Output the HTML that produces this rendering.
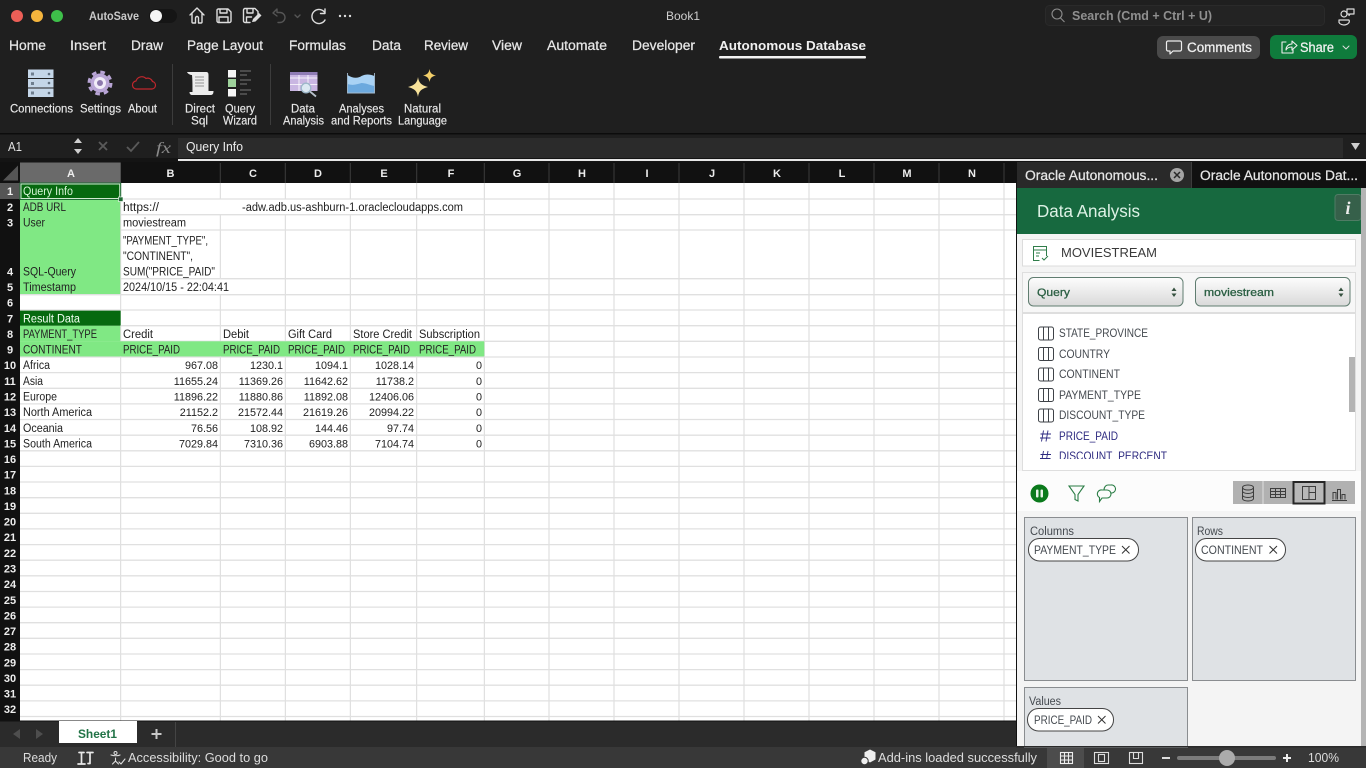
<!DOCTYPE html>
<html lang="en"><head><meta charset="utf-8"><title>Book1</title>
<style>
html,body{margin:0;padding:0;background:#1f1f1f;overflow:hidden}
svg{display:block;font-family:"Liberation Sans",sans-serif}
.m{font-size:13.5px;fill:#e6e6e6;stroke:#e6e6e6;stroke-width:.25}
.r{font-size:11.5px;fill:#e8e8e8;stroke:#e8e8e8;stroke-width:.15;text-anchor:middle}
.c{font-size:11.5px;fill:#222}
.n{font-size:10.8px;fill:#222;text-anchor:end}
.h{font-size:11px;font-weight:bold;fill:#eee;text-anchor:middle}
.l{font-size:11.5px;fill:#454a50}
.s{font-size:12.5px;fill:#ddd}
.i{fill:none;stroke:#ddd;stroke-width:1.4;stroke-linecap:round;stroke-linejoin:round}
.p{fill:none;stroke:#3e4247;stroke-width:1}
.chip{fill:#fff;stroke:#444;stroke-width:1}
</style></head><body>
<svg width="1366" height="768" viewBox="0 0 1366 768" xmlns="http://www.w3.org/2000/svg">
<defs>
<linearGradient id="sel" x1="0" y1="0" x2="0" y2="1"><stop offset="0" stop-color="#fdfdfd"/><stop offset="1" stop-color="#d9d9d9"/></linearGradient>
<clipPath id="lst"><rect x="1022" y="314" width="334" height="145"/></clipPath>
</defs>
<rect width="1366" height="768" fill="#1f1f1f"/>
<!-- traffic -->
<circle cx="17" cy="16" r="6" fill="#ec5f57"/><circle cx="37" cy="16" r="6" fill="#f5b53d"/><circle cx="57" cy="16" r="6" fill="#3ec04a"/>
<text x="89" y="20" font-size="11.5" font-weight="bold" fill="#c9c9c9" textLength="50" lengthAdjust="spacingAndGlyphs">AutoSave</text>
<rect x="149" y="9" width="28" height="14" rx="7" fill="#151515"/><circle cx="156" cy="16" r="6" fill="#f4f4f4"/>
<!-- qat -->
<path class="i" d="M190 15l7-7 7 7M192 13v9a1 1 0 0 0 1 1h2.500v-5a1.500 1.500 0 0 1 3 0v5h2.500a1 1 0 0 0 1-1v-9"/>
<path class="i" d="M218 9h10l3 3v9a1.500 1.500 0 0 1-1.500 1.500h-11a1.500 1.500 0 0 1-1.500-1.500v-11a1.500 1.500 0 0 1 1-1zM220 9v4h7v-4M219 22v-5h9v5"/>
<path class="i" d="M250 22.500h-5a1.500 1.500 0 0 1-1.500-1.500v-11a1.500 1.500 0 0 1 1.500-1.500h10l3 3v3M247 9v4h6v-4M246.500 22v-5h5"/>
<path d="M252 22l1-3 6-6 2.500 2.500-6 6z" fill="#ddd"/>
<path class="i" style="stroke:#555" d="M273 13l4-4v3.500h3a5 5 0 0 1 0 10h-2M273 13l4 3"/>
<path class="i" style="stroke:#555" d="M295 15l2.500 2.500 2.500-2.500"/>
<path class="i" d="M325 13a7 7 0 1 0 0 7M325 9v4.500h-4.500"/>
<circle cx="340" cy="16" r="1.200" fill="#ddd"/><circle cx="345" cy="16" r="1.200" fill="#ddd"/><circle cx="350" cy="16" r="1.200" fill="#ddd"/>
<text x="666" y="20" font-size="12" fill="#cfcfcf" textLength="34" lengthAdjust="spacingAndGlyphs">Book1</text>
<!-- search -->
<rect x="1045.500" y="5.500" width="279" height="20" rx="4" fill="#232323" stroke="#2a2a2a"/>
<circle cx="1057" cy="14" r="5" fill="none" stroke="#8e8e8e" stroke-width="1.100"/><path d="M1060.500 18l4 4" stroke="#8e8e8e" stroke-width="1.100"/>
<text x="1072" y="20" font-size="12.5" font-weight="bold" fill="#8f8f8f" textLength="140" lengthAdjust="spacingAndGlyphs">Search (Cmd + Ctrl + U)</text>
<circle cx="1344" cy="14" r="3" class="i" style="stroke-width:1.200"/><path class="i" style="stroke-width:1.200" d="M1339 20h10a5 3.500 0 0 1-10 2.500zM1347 9h7v5h-4l-1 1.500v-1.500h-2z"/>
<!-- menu -->
<text class="m" x="9" y="50" textLength="37" lengthAdjust="spacingAndGlyphs">Home</text>
<text class="m" x="70" y="50" textLength="36" lengthAdjust="spacingAndGlyphs">Insert</text>
<text class="m" x="131" y="50" textLength="32" lengthAdjust="spacingAndGlyphs">Draw</text>
<text class="m" x="187" y="50" textLength="76" lengthAdjust="spacingAndGlyphs">Page Layout</text>
<text class="m" x="289" y="50" textLength="57" lengthAdjust="spacingAndGlyphs">Formulas</text>
<text class="m" x="372" y="50" textLength="29" lengthAdjust="spacingAndGlyphs">Data</text>
<text class="m" x="424" y="50" textLength="44" lengthAdjust="spacingAndGlyphs">Review</text>
<text class="m" x="492" y="50" textLength="30" lengthAdjust="spacingAndGlyphs">View</text>
<text class="m" x="547" y="50" textLength="60" lengthAdjust="spacingAndGlyphs">Automate</text>
<text class="m" x="632" y="50" textLength="63" lengthAdjust="spacingAndGlyphs">Developer</text>
<text x="719" y="50" font-size="13" font-weight="bold" fill="#f0f0f0" textLength="147" lengthAdjust="spacingAndGlyphs">Autonomous Database</text>
<rect x="719" y="56" width="147" height="2.500" rx="1" fill="#f2f2f2"/>
<!-- comments/share -->
<rect x="1157" y="36" width="103" height="23" rx="6" fill="#4a4a4a"/>
<path class="i" style="stroke:#eee;stroke-width:1.200" d="M1168 41h12a1.500 1.500 0 0 1 1.500 1.500v7a1.500 1.500 0 0 1-1.500 1.500h-7l-3 3v-3h-2a1.500 1.500 0 0 1-1.500-1.500v-7a1.500 1.500 0 0 1 1.500-1.500z"/>
<text x="1187" y="52" font-size="13.500" fill="#f0f0f0" stroke="#f0f0f0" stroke-width=".25" textLength="65" lengthAdjust="spacingAndGlyphs">Comments</text>
<rect x="1270" y="35" width="87" height="24" rx="6" fill="#0f7b3c"/>
<path class="i" style="stroke:#eee;stroke-width:1.100" d="M1286 42h-4v11h11v-3M1286 50c0-4 3-6 6-6v-3l5 4.500-5 4.500v-3c-3 0-5 1-6 3z"/>
<text x="1300" y="52" font-size="13.500" fill="#f2f2f2" stroke="#f2f2f2" stroke-width=".25" textLength="34" lengthAdjust="spacingAndGlyphs">Share</text>
<path class="i" style="stroke-width:1" d="M1343 46l3 3 3-3"/>
<!-- ribbon icons -->
<g>
<rect x="28" y="69.500" width="25.500" height="8.500" fill="#c4d6e8"/><rect x="28" y="79" width="25.500" height="8.500" fill="#c4d6e8"/><rect x="28" y="88.500" width="25.500" height="8.500" fill="#c4d6e8"/>
<rect x="31" y="72.500" width="3" height="3" fill="#6f7f8f"/><rect x="31" y="82" width="3" height="3" fill="#6f7f8f"/><rect x="31" y="91.500" width="3" height="3" fill="#6f7f8f"/>
<circle cx="49" cy="74" r="1.300" fill="#5f6f7f"/><circle cx="49" cy="83" r="1.300" fill="#5f6f7f"/><circle cx="49" cy="93" r="1.300" fill="#5f6f7f"/>
</g>
<circle cx="100" cy="83" r="11" fill="none" stroke="#b9a5d6" stroke-width="3" stroke-dasharray="4.600 4.040"/>
<circle cx="100" cy="83" r="9.500" fill="#b9a5d6"/><circle cx="100" cy="83" r="6" fill="#f1ecf8"/><circle cx="100" cy="83" r="3" fill="#8d78ad"/>
<path fill="none" stroke="#c0272d" stroke-width="1.200" d="M137 89h15a3.800 3.800 0 0 0 .5-7.500a5 5 0 0 0-6.500-3a6 6 0 0 0-10 2.500a4 4 0 0 0 1 8z"/>
<path fill="#ececec" d="M187 72h19c2 0 2.500 1 2.500 3v16h5c0 3-1 4-3 4h-18c-2 0-3-1-3-3h3c0-7 0-12-.500-17-1.500 0-4-1-5-3z"/>
<path stroke="#777" stroke-width=".8" d="M195 77h9M195 80h9M195 83h9M195 86h9"/>
<rect x="228" y="70" width="8" height="7.500" fill="#f5f5f5"/><rect x="228" y="79" width="8" height="8" fill="#9ed29b"/><rect x="228" y="89" width="8" height="7.500" fill="#f5f5f5"/>
<path stroke="#777" stroke-width="1" d="M240 71h11M240 75h7M240 80h11M240 84h7M240 90h11M240 94h7"/>
<rect x="290" y="72" width="27.500" height="19" fill="#c9b6e2"/><path stroke="#fff" stroke-width=".8" d="M290 78h27.500M290 84.500h27.500M299 72v19M308 72v19"/>
<path d="M290 72h27.500v3h-27.500z" fill="#8f7cb4"/>
<circle cx="306" cy="88" r="4.800" fill="#dbe8f2" stroke="#9db7c9" stroke-width="1.300"/><path d="M310 91.500l6 5" stroke="#b8c2cc" stroke-width="1.800"/>
<path d="M347.500 75c6 4 11 3 14 1 4-2 8-2 13 0v17h-27z" fill="#a9d2f4"/>
<path d="M347.500 84c6 2 10 0 14-1 4 0 8 2 13 3v7h-27z" fill="#6ca9de"/>
<path d="M347.500 73v20h27v-20" fill="none" stroke="#a4bcd0" stroke-width=".9"/>
<path d="M418 77c1 6 3 8 10 10-7 2-9 4-10 10-1-6-3-8-10-10 7-2 9-4 10-10z" fill="#f7e29a"/>
<path d="M429.500 69c.7 4 2 5.500 6.500 6.500-4.500 1-5.800 2.500-6.500 6.500-.7-4-2-5.500-6.500-6.500 4.500-1 5.800-2.500 6.500-6.500z" fill="#f3cf6a"/>
<rect x="172" y="64" width="1" height="61" fill="#3c3c3c"/><rect x="270" y="64" width="1" height="61" fill="#3c3c3c"/>
<text class="r" x="41.500" y="112.500" textLength="63" lengthAdjust="spacingAndGlyphs">Connections</text>
<text class="r" x="100.500" y="112.500" textLength="41" lengthAdjust="spacingAndGlyphs">Settings</text>
<text class="r" x="142.500" y="112.500" textLength="29" lengthAdjust="spacingAndGlyphs">About</text>
<text class="r" x="200" y="112.500" textLength="30" lengthAdjust="spacingAndGlyphs">Direct</text>
<text class="r" x="199.500" y="124.500" textLength="17" lengthAdjust="spacingAndGlyphs">Sql</text>
<text class="r" x="240" y="112.500" textLength="30" lengthAdjust="spacingAndGlyphs">Query</text>
<text class="r" x="240" y="124.500" textLength="34" lengthAdjust="spacingAndGlyphs">Wizard</text>
<text class="r" x="303" y="112.500" textLength="24" lengthAdjust="spacingAndGlyphs">Data</text>
<text class="r" x="303.500" y="124.500" textLength="41" lengthAdjust="spacingAndGlyphs">Analysis</text>
<text class="r" x="361.500" y="112.500" textLength="45" lengthAdjust="spacingAndGlyphs">Analyses</text>
<text class="r" x="361.500" y="124.500" textLength="61" lengthAdjust="spacingAndGlyphs">and Reports</text>
<text class="r" x="422.500" y="112.500" textLength="37" lengthAdjust="spacingAndGlyphs">Natural</text>
<text class="r" x="422.500" y="124.500" textLength="49" lengthAdjust="spacingAndGlyphs">Language</text>
<!-- formula bar -->
<rect x="0" y="133" width="1366" height="1.500" fill="#0c0c0c"/>
<rect x="178" y="138" width="1165" height="20" fill="#2b2b2b"/>
<rect x="0" y="158" width="1366" height="4" fill="#141414"/>
<rect x="178" y="159" width="1188" height="2" fill="#e6e6e6"/>
<text x="8" y="151" font-size="12.5" fill="#e2e2e2" textLength="14" lengthAdjust="spacingAndGlyphs">A1</text>
<path d="M74 143l4-5 4 5zM74 149l4 5 4-5z" fill="#cfcfcf"/>
<path d="M99 142l8 8M107 142l-8 8" stroke="#5a5a5a" stroke-width="1.800"/>
<path d="M127 147l4 4 8-9" fill="none" stroke="#5a5a5a" stroke-width="1.800"/>
<text x="156" y="153" font-family="Liberation Serif" font-style="italic" font-size="16" fill="#8a8a8a" textLength="15" lengthAdjust="spacingAndGlyphs">fx</text>
<text x="186" y="151" font-size="12.500" fill="#ececec" textLength="57" lengthAdjust="spacingAndGlyphs">Query Info</text>
<path d="M1351 143h9l-4.500 7z" fill="#cfcfcf"/>
<!-- sheet -->
<rect x="0" y="162" width="1016" height="21" fill="#111"/>
<rect x="0" y="183" width="20" height="538" fill="#111"/>
<rect x="20" y="183" width="996" height="538" fill="#fff"/>
<path d="M3 180.500h15v-15z" fill="#555"/>
<rect x="20" y="162.500" width="100.700" height="20.500" fill="#6a6a6a"/>
<rect x="0" y="183" width="20" height="16" fill="#555"/>
<!-- fills -->
<rect x="20" y="199" width="100.700" height="95.700" fill="#80e884"/>
<rect x="20" y="325.700" width="100.700" height="15.600" fill="#80e884"/>
<rect x="20" y="341.300" width="464.300" height="15.700" fill="#80e884"/>
<rect x="20" y="183" width="100.700" height="16" fill="#06690f"/>
<rect x="20" y="310" width="100.700" height="15.700" fill="#06690f"/>
<!-- grid -->
<g stroke="#d9d9d9" stroke-width="1" fill="none">
<path d="M120.700 183v127M120.700 325.700v395.300"/>
<path d="M220.300 183v16M220.300 214.700v64M220.300 294.700v426.300"/>
<path d="M285.300 183v16M285.300 214.700v506.300"/>
<path d="M350.300 183v16M350.300 214.700v506.300"/>
<path d="M416.700 183v16M416.700 214.700v506.300"/>
<path d="M484.300 183v538"/>
<path d="M549 183v538M614 183v538M679 183v538M744 183v538M809 183v538M874 183v538M939 183v538M1004 183v538"/>
</g>
<g stroke="#e0e0e0" stroke-width="1.300" fill="none">
<path d="M120.700 199H1016M120.700 214.700H1016M120.700 230H1016M120.700 278.700H1016M20 294.700H1016M20 310H1016M120.700 325.700H1016M120.700 341.300H1016"/>
<path d="M20 357H1016M20 372.600H1016M20 388.300H1016M20 403.900H1016M20 419.500H1016M20 435.200H1016M20 450.800H1016M20 466.400H1016M20 482H1016M20 497.700H1016M20 513.300H1016M20 528.900H1016M20 544.600H1016M20 560.200H1016M20 575.800H1016M20 591.500H1016M20 607.100H1016M20 622.700H1016M20 638.300H1016M20 654H1016M20 669.600H1016M20 685.200H1016M20 700.900H1016M20 716.500H1016"/>
</g>
<rect x="20" y="341.300" width="464.300" height="15" fill="#80e884"/>
<g stroke="#3c3c3c" stroke-width="1">
<path d="M220.300 163v20M285.300 163v20M350.300 163v20M416.700 163v20M484.300 163v20M549 163v20M614 163v20M679 163v20M744 163v20M809 163v20M874 163v20M939 163v20M1004 163v20"/>
</g>
<rect x="21" y="184" width="98.700" height="14.500" fill="none" stroke="#cfe9cf" stroke-width="1"/>
<rect x="20" y="183" width="100.700" height="16.500" fill="none" stroke="#1f6b34" stroke-width="1"/>
<rect x="118.500" y="197" width="4.500" height="4.500" fill="#1f6b34" stroke="#fff" stroke-width=".6"/>
<!-- headers -->
<text class="h" x="71" y="177">A</text><text class="h" x="170.500" y="177">B</text><text class="h" x="253" y="177">C</text><text class="h" x="318" y="177">D</text><text class="h" x="384" y="177">E</text><text class="h" x="451" y="177">F</text><text class="h" x="517" y="177">G</text><text class="h" x="582" y="177">H</text><text class="h" x="647" y="177">I</text><text class="h" x="712" y="177">J</text><text class="h" x="777" y="177">K</text><text class="h" x="842" y="177">L</text><text class="h" x="907" y="177">M</text><text class="h" x="972" y="177">N</text>
<text class="h" x="10" y="195">1</text><text class="h" x="10" y="211">2</text><text class="h" x="10" y="226.500">3</text><text class="h" x="10" y="275.500">4</text><text class="h" x="10" y="291">5</text><text class="h" x="10" y="306.500">6</text><text class="h" x="10" y="322.500">7</text><text class="h" x="10" y="338">8</text><text class="h" x="10" y="353.500">9</text>
<text class="h" x="10" y="369">10</text><text class="h" x="10" y="385">11</text><text class="h" x="10" y="400.500">12</text><text class="h" x="10" y="416">13</text><text class="h" x="10" y="431.800">14</text><text class="h" x="10" y="447.400">15</text><text class="h" x="10" y="463">16</text><text class="h" x="10" y="478.700">17</text><text class="h" x="10" y="494.300">18</text><text class="h" x="10" y="510">19</text><text class="h" x="10" y="525.600">20</text><text class="h" x="10" y="541.200">21</text><text class="h" x="10" y="556.900">22</text><text class="h" x="10" y="572.500">23</text><text class="h" x="10" y="588.100">24</text><text class="h" x="10" y="603.800">25</text><text class="h" x="10" y="619.400">26</text><text class="h" x="10" y="635">27</text><text class="h" x="10" y="650.600">28</text><text class="h" x="10" y="666.300">29</text><text class="h" x="10" y="681.900">30</text><text class="h" x="10" y="697.500">31</text><text class="h" x="10" y="713.200">32</text>
<!-- cells -->
<text class="c" style="fill:#d6f5d6" x="23" y="195" textLength="50" lengthAdjust="spacingAndGlyphs">Query Info</text>
<text class="c" x="23" y="211" textLength="43" lengthAdjust="spacingAndGlyphs">ADB URL</text>
<text class="c" x="123" y="211" textLength="36" lengthAdjust="spacingAndGlyphs">https://</text>
<text class="c" x="242" y="211" textLength="221" lengthAdjust="spacingAndGlyphs">-adw.adb.us-ashburn-1.oraclecloudapps.com</text>
<text class="c" x="23" y="226.500" textLength="22" lengthAdjust="spacingAndGlyphs">User</text>
<text class="c" x="123" y="226.500" textLength="63" lengthAdjust="spacingAndGlyphs">moviestream</text>
<text class="c" x="123" y="244.700" textLength="85" lengthAdjust="spacingAndGlyphs">"PAYMENT_TYPE",</text>
<text class="c" x="123" y="260" textLength="70" lengthAdjust="spacingAndGlyphs">"CONTINENT",</text>
<text class="c" x="123" y="275.700" textLength="92" lengthAdjust="spacingAndGlyphs">SUM("PRICE_PAID"</text>
<text class="c" x="23" y="275.700" textLength="53" lengthAdjust="spacingAndGlyphs">SQL-Query</text>
<text class="c" x="23" y="291" textLength="53" lengthAdjust="spacingAndGlyphs">Timestamp</text>
<text class="c" x="123" y="291" textLength="106" lengthAdjust="spacingAndGlyphs">2024/10/15 - 22:04:41</text>
<text class="c" style="fill:#f2fff2" x="23" y="322.500" textLength="57" lengthAdjust="spacingAndGlyphs">Result Data</text>
<text class="c" x="23" y="338" textLength="74" lengthAdjust="spacingAndGlyphs">PAYMENT_TYPE</text>
<text class="c" x="123" y="338" textLength="30" lengthAdjust="spacingAndGlyphs">Credit</text>
<text class="c" x="223" y="338" textLength="26" lengthAdjust="spacingAndGlyphs">Debit</text>
<text class="c" x="288" y="338" textLength="44" lengthAdjust="spacingAndGlyphs">Gift Card</text>
<text class="c" x="353" y="338" textLength="59" lengthAdjust="spacingAndGlyphs">Store Credit</text>
<text class="c" x="419" y="338" textLength="61" lengthAdjust="spacingAndGlyphs">Subscription</text>
<text class="c" x="23" y="353.500" textLength="59" lengthAdjust="spacingAndGlyphs">CONTINENT</text>
<text class="c" x="123" y="353.500" textLength="57" lengthAdjust="spacingAndGlyphs">PRICE_PAID</text>
<text class="c" x="223" y="353.500" textLength="57" lengthAdjust="spacingAndGlyphs">PRICE_PAID</text>
<text class="c" x="288" y="353.500" textLength="57" lengthAdjust="spacingAndGlyphs">PRICE_PAID</text>
<text class="c" x="353" y="353.500" textLength="57" lengthAdjust="spacingAndGlyphs">PRICE_PAID</text>
<text class="c" x="419" y="353.500" textLength="57" lengthAdjust="spacingAndGlyphs">PRICE_PAID</text>
<text class="c" x="23" y="369" textLength="27" lengthAdjust="spacingAndGlyphs">Africa</text><text class="c" x="23" y="385" textLength="20" lengthAdjust="spacingAndGlyphs">Asia</text><text class="c" x="23" y="400.500" textLength="34" lengthAdjust="spacingAndGlyphs">Europe</text>
<text class="c" x="23" y="416" textLength="69" lengthAdjust="spacingAndGlyphs">North America</text><text class="c" x="23" y="431.800" textLength="40" lengthAdjust="spacingAndGlyphs">Oceania</text>
<text class="c" x="23" y="447.400" textLength="69" lengthAdjust="spacingAndGlyphs">South America</text>
<text class="n" x="218" y="369">967.08</text><text class="n" x="283" y="369">1230.1</text><text class="n" x="348" y="369">1094.1</text><text class="n" x="414" y="369">1028.14</text><text class="n" x="482" y="369">0</text>
<text class="n" x="218" y="385">11655.24</text><text class="n" x="283" y="385">11369.26</text><text class="n" x="348" y="385">11642.62</text><text class="n" x="414" y="385">11738.2</text><text class="n" x="482" y="385">0</text>
<text class="n" x="218" y="400.500">11896.22</text><text class="n" x="283" y="400.500">11880.86</text><text class="n" x="348" y="400.500">11892.08</text><text class="n" x="414" y="400.500">12406.06</text><text class="n" x="482" y="400.500">0</text>
<text class="n" x="218" y="416">21152.2</text><text class="n" x="283" y="416">21572.44</text><text class="n" x="348" y="416">21619.26</text><text class="n" x="414" y="416">20994.22</text><text class="n" x="482" y="416">0</text>
<text class="n" x="218" y="431.800">76.56</text><text class="n" x="283" y="431.800">108.92</text><text class="n" x="348" y="431.800">144.46</text><text class="n" x="414" y="431.800">97.74</text><text class="n" x="482" y="431.800">0</text>
<text class="n" x="218" y="447.400">7029.84</text><text class="n" x="283" y="447.400">7310.36</text><text class="n" x="348" y="447.400">6903.88</text><text class="n" x="414" y="447.400">7104.74</text><text class="n" x="482" y="447.400">0</text>
<!-- sheet tabs -->
<rect x="0" y="721" width="1016" height="26" fill="#2b2b2b"/>
<rect x="0" y="720.500" width="1016" height="1" fill="#111"/>
<rect x="59" y="721" width="78" height="22" fill="#fff"/>
<text x="78" y="738" font-size="12" font-weight="bold" fill="#217346" textLength="39" lengthAdjust="spacingAndGlyphs">Sheet1</text>
<path d="M20 729v10l-7-5z" fill="#4e4e4e"/><path d="M36 729v10l7-5z" fill="#4e4e4e"/>
<path d="M156.500 729v10M151.500 734h10" stroke="#c8c8c8" stroke-width="2"/>
<rect x="175" y="722" width="1" height="25" fill="#444"/>
<!-- status -->
<rect x="0" y="747" width="1366" height="21" fill="#383838"/>
<text class="s" x="23" y="762" textLength="34" lengthAdjust="spacingAndGlyphs">Ready</text>
<path class="i" style="stroke:#e8e8e8;stroke-width:1.700" d="M79 752.500h5M81.500 752.500v11M78 764h7M87 752.500h6M90 752.500v11h-2"/>
<path class="i" style="stroke:#ddd;stroke-width:1.100" d="M111 755c3 1 7 1 9 0M115.500 758v3l-3 3M115.500 761l3 3M119 762l2 2 4-5"/><circle cx="115.500" cy="753" r="1.500" fill="none" stroke="#ddd"/>
<text class="s" x="128" y="762" textLength="140" lengthAdjust="spacingAndGlyphs">Accessibility: Good to go</text>
<path d="M870 749.500l5.500 2.700v7.300l-5.500 3-5.500-3v-7.300z" fill="#eee"/><circle cx="864.500" cy="761" r="3.700" fill="#eee" stroke="#383838"/>
<text class="s" x="878" y="762" textLength="159" lengthAdjust="spacingAndGlyphs">Add-ins loaded successfully</text>
<rect x="1047" y="747" width="37" height="21" fill="#4c4c4c"/>
<g fill="none" stroke="#eee" stroke-width="1.100"><rect x="1060.500" y="752.500" width="12" height="11"/><path d="M1064.500 752.500v11M1068.500 752.500v11M1060.500 756h12M1060.500 760h12"/></g>
<g fill="none" stroke="#ddd" stroke-width="1.100"><rect x="1094.500" y="752.500" width="14" height="11"/><rect x="1098.500" y="754.500" width="6" height="7"/><rect x="1129.500" y="752.500" width="13" height="11"/><path d="M1133.500 752.500v6h5v-6"/></g>
<rect x="1162" y="757" width="8" height="2" fill="#ddd"/><rect x="1177" y="756" width="99" height="4" rx="2" fill="#7b7b7b"/><circle cx="1227" cy="758" r="8" fill="#ababab"/>
<path d="M1283 758h8M1287 754v8" stroke="#eee" stroke-width="2"/>
<text class="s" x="1308" y="762" textLength="31" lengthAdjust="spacingAndGlyphs">100%</text>
<!-- task pane -->
<rect x="1016" y="162" width="350" height="585" fill="#f4f4f4"/>
<rect x="1016" y="162" width="1" height="585" fill="#111"/>
<rect x="1017" y="162" width="349" height="26" fill="#111"/>
<rect x="1017" y="162" width="175" height="26" fill="#292929"/>
<rect x="1191" y="162" width="1" height="26" fill="#3c3c3c"/>
<text x="1025" y="180" font-size="13.500" fill="#e6e6e6" stroke="#e6e6e6" stroke-width=".25" textLength="133" lengthAdjust="spacingAndGlyphs">Oracle Autonomous...</text>
<circle cx="1177" cy="175" r="7" fill="#a5a5a5"/><path d="M1174 172l6 6M1180 172l-6 6" stroke="#2a2a2a" stroke-width="1.500"/>
<text x="1200" y="180" font-size="13.500" fill="#e6e6e6" stroke="#e6e6e6" stroke-width=".25" textLength="158" lengthAdjust="spacingAndGlyphs">Oracle Autonomous Dat...</text>
<rect x="1017" y="188" width="344" height="46" fill="#17693f"/>
<text x="1037" y="217" font-size="17.500" fill="#def2e6" textLength="103" lengthAdjust="spacingAndGlyphs">Data Analysis</text>
<rect x="1335" y="194.500" width="26" height="26" rx="3" fill="#36604a" stroke="#4f7c64"/>
<text x="1348" y="214" font-family="Liberation Serif" font-style="italic" font-weight="bold" font-size="18" fill="#eee" text-anchor="middle">i</text>
<rect x="1361" y="188" width="5" height="559" fill="#b4b4b4"/>
<rect x="1022.500" y="239.500" width="333" height="26.500" fill="#fff" stroke="#dcdcdc"/>
<g fill="none" stroke="#2f7d4a" stroke-width="1"><path d="M1046.500 256v-9.500h-13v14h6M1033.500 250h13M1036 253h4M1036 256h3"/><path d="M1042 258l2 2 4-4"/></g>
<text x="1061" y="257" font-size="13" fill="#3a3a3a" textLength="96" lengthAdjust="spacingAndGlyphs">MOVIESTREAM</text>
<rect x="1022.500" y="272.500" width="333" height="40" fill="#f7f7f7" stroke="#dedede"/>
<rect x="1028.500" y="277.500" width="154.500" height="28.500" rx="5" fill="url(#sel)" stroke="#607d70"/>
<rect x="1195.500" y="277.500" width="154.500" height="28.500" rx="5" fill="url(#sel)" stroke="#607d70"/>
<text x="1037" y="296" font-size="11" fill="#2b5f43" stroke="#2b5f43" stroke-width=".3" textLength="33" lengthAdjust="spacingAndGlyphs">Query</text>
<text x="1204" y="296" font-size="11" fill="#2b5f43" stroke="#2b5f43" stroke-width=".3" textLength="70" lengthAdjust="spacingAndGlyphs">moviestream</text>
<path d="M1171.500 291l2.500-3.500 2.500 3.500zM1171.500 293.500l2.500 3.500 2.500-3.500zM1338.500 291l2.500-3.500 2.500 3.500zM1338.500 293.500l2.500 3.500 2.500-3.500z" fill="#35513f"/>
<rect x="1022.500" y="313.500" width="333" height="157" fill="#fff" stroke="#dedede"/>
<rect x="1349" y="357" width="6" height="55" fill="#b3b3b3"/>
<g clip-path="url(#lst)">
<g class="p"><rect x="1038.500" y="327" width="15" height="13" rx="2"/><path d="M1043.500 327v13M1048.500 327v13"/>
<rect x="1038.500" y="347.500" width="15" height="13" rx="2"/><path d="M1043.500 347.500v13M1048.500 347.500v13"/>
<rect x="1038.500" y="368" width="15" height="13" rx="2"/><path d="M1043.500 368v13M1048.500 368v13"/>
<rect x="1038.500" y="388.500" width="15" height="13" rx="2"/><path d="M1043.500 388.500v13M1048.500 388.500v13"/>
<rect x="1038.500" y="409" width="15" height="13" rx="2"/><path d="M1043.500 409v13M1048.500 409v13"/></g>
<text class="l" x="1059" y="337" textLength="89" lengthAdjust="spacingAndGlyphs">STATE_PROVINCE</text>
<text class="l" x="1059" y="358" textLength="51" lengthAdjust="spacingAndGlyphs">COUNTRY</text>
<text class="l" x="1059" y="378" textLength="61" lengthAdjust="spacingAndGlyphs">CONTINENT</text>
<text class="l" x="1059" y="399" textLength="82" lengthAdjust="spacingAndGlyphs">PAYMENT_TYPE</text>
<text class="l" x="1059" y="419" textLength="86" lengthAdjust="spacingAndGlyphs">DISCOUNT_TYPE</text>
<text class="l" style="fill:#2d2a80" x="1059" y="440" textLength="59" lengthAdjust="spacingAndGlyphs">PRICE_PAID</text>
<text class="l" style="fill:#2d2a80" x="1059" y="460" textLength="108" lengthAdjust="spacingAndGlyphs">DISCOUNT_PERCENT</text>
<path d="M1043.500 430.500l-2 11M1048 430.500l-2 11M1040.500 434h10.500M1040 438h10.500M1043.500 451l-2 11M1048 451l-2 11M1040.500 454.500h10.500M1040 458.500h10.500" stroke="#2d2a80" fill="none" stroke-width=".9"/>
</g>
<rect x="1017" y="471" width="344" height="40" fill="#fcfcfc"/>
<circle cx="1039.500" cy="493.500" r="9" fill="#0b7a1c"/><rect x="1036" y="489.500" width="2.500" height="8" rx="1" fill="#e8f3e8"/><rect x="1040.500" y="489.500" width="2.500" height="8" rx="1" fill="#e8f3e8"/>
<path d="M1069 486h15l-6 8.500v6.500l-3-1.500v-5z" fill="none" stroke="#2a7d45" stroke-width="1.100"/>
<path d="M1102 490h5a4 4 0 0 1 0 8h-5l-2.500 3.500v-4a4 4 0 0 1 2.500-7.500zM1104 490c0-3 2-5 4-5h3a4 4 0 0 1 1 8h-1" fill="none" stroke="#2a7d45" stroke-width="1.100"/>
<rect x="1233" y="481" width="122" height="23" fill="#b1b1b1"/>
<rect x="1262" y="481" width="2" height="23" fill="#c8c8c8"/>
<rect x="1293.500" y="482" width="31" height="21.500" fill="#b8b8b8" stroke="#262626" stroke-width="2"/>
<g fill="none" stroke="#3d3d3d" stroke-width="1">
<ellipse cx="1248" cy="487.500" rx="5.500" ry="2.500"/><path d="M1242.500 487.500v11c0 1.500 2.500 2.500 5.500 2.500s5.500-1 5.500-2.500v-11M1242.500 491c0 1.500 2.500 2.500 5.500 2.500s5.500-1 5.500-2.500M1242.500 495c0 1.500 2.500 2.500 5.500 2.500s5.500-1 5.500-2.500"/>
<rect x="1270.500" y="488.500" width="15" height="9"/><path d="M1270.500 491.500h15M1270.500 494.500h15M1275.500 488.500v9M1280.500 488.500v9"/>
<rect x="1302.500" y="486.500" width="13" height="13"/><path d="M1309 486.500v13M1309 492.500h6.500"/>
<path d="M1333 499.500v-7h3v7M1337.500 499.500v-10h3v10M1342 499.500v-5h3v5M1332 500.500h15"/>
</g>
<rect x="1024.500" y="517.500" width="163" height="163" fill="#dfe2e5" stroke="#8a8d90"/>
<rect x="1192.500" y="517.500" width="163" height="163" fill="#dfe2e5" stroke="#8a8d90"/>
<rect x="1024.500" y="687.500" width="163" height="60" fill="#dfe2e5" stroke="#8a8d90"/>
<text class="l" x="1030" y="535" textLength="44" lengthAdjust="spacingAndGlyphs">Columns</text>
<text class="l" x="1197" y="535" textLength="26" lengthAdjust="spacingAndGlyphs">Rows</text>
<text class="l" x="1029" y="705" textLength="32" lengthAdjust="spacingAndGlyphs">Values</text>
<rect class="chip" x="1028.500" y="538.500" width="110" height="22.500" rx="11"/>
<rect class="chip" x="1195.500" y="538.500" width="90" height="22.500" rx="11"/>
<rect class="chip" x="1027.500" y="708.500" width="86" height="22.500" rx="11"/>
<text class="l" x="1034" y="554" textLength="82" lengthAdjust="spacingAndGlyphs">PAYMENT_TYPE</text>
<text class="l" x="1201" y="554" textLength="62" lengthAdjust="spacingAndGlyphs">CONTINENT</text>
<text class="l" x="1034" y="724" textLength="58" lengthAdjust="spacingAndGlyphs">PRICE_PAID</text>
<path d="M1122 546l7.500 7.500M1129.500 546l-7.500 7.500M1269.500 546l7.500 7.500M1277 546l-7.500 7.500M1098 716l7.500 7.500M1105.500 716l-7.500 7.500" stroke="#333" stroke-width="1" fill="none"/>
<rect x="1016" y="746" width="350" height="1.500" fill="#2a2a2a"/>
</svg>
</body></html>
